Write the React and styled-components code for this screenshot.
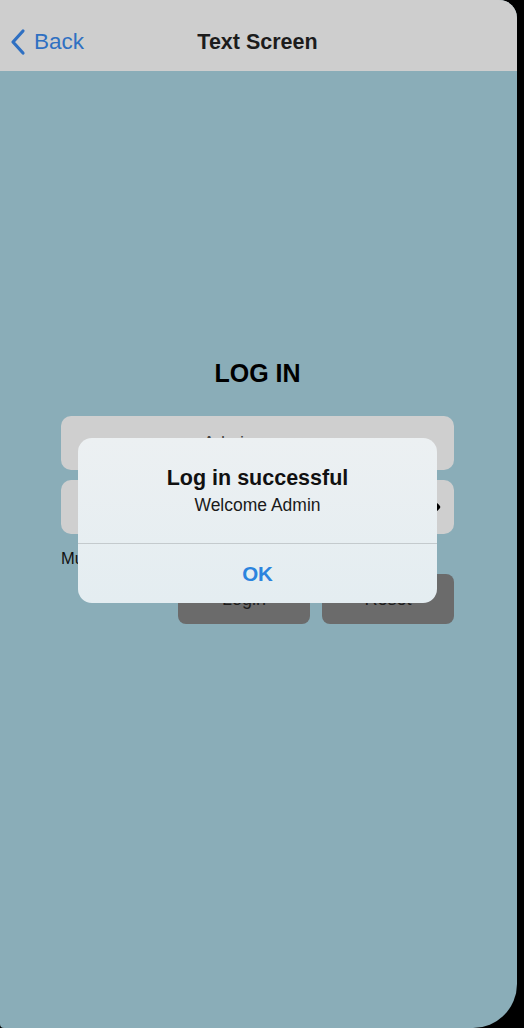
import React from 'react';
import styled, { createGlobalStyle } from 'styled-components';
import { IoEye } from 'react-icons/io5';

const GlobalStyle = createGlobalStyle`
  html, body {
    margin: 0;
    padding: 0;
    background: #000;
  }
  body {
    font-family: "Liberation Sans", Arial, sans-serif;
  }
`;

const Screen = styled.div`
  position: relative;
  width: 517px;
  height: 1028px;
  background: #8aadb8;
  border-radius: 0 18px 44px 4px;
  overflow: hidden;
  display: flex;
  flex-direction: column;
`;

const Header = styled.div`
  height: 71px;
  background: #cecece;
  display: grid;
  grid-template-columns: 1fr auto 1fr;
  align-items: center;
  padding-top: 13px;
  box-sizing: border-box;
`;

const BackButton = styled.div`
  display: flex;
  align-items: center;
  gap: 8px;
  padding-left: 9px;
  color: #2f70c2;
  font-size: 22.5px;
`;

const Title = styled.div`
  font-size: 21.5px;
  font-weight: 700;
  color: #1c1c1c;
  margin-right: 2px;
`;

const Content = styled.div`
  flex: 1;
  display: flex;
  flex-direction: column;
  align-items: center;
  padding: 287px 2px 0 0;
`;

const Heading = styled.h1`
  margin: 0 0 28px;
  font-size: 25px;
  line-height: 30px;
  font-weight: 700;
  color: #000;
`;

const Form = styled.div`
  width: 393px;
  display: flex;
  flex-direction: column;
  gap: 10px;
`;

const Field = styled.div`
  height: 54px;
  border-radius: 10px;
  background: #cfcfcf;
  display: flex;
  align-items: center;
  justify-content: center;
  padding-right: ${(props) => props.offset || 0}px;
  position: relative;
  font-size: 18px;
  color: #444;
`;

const EyeIcon = styled.span`
  position: absolute;
  right: 13px;
  top: 50%;
  transform: translateY(-50%);
  display: flex;
  color: #000;
`;

const Hint = styled.div`
  margin-top: 2px;
  font-size: 16.5px;
  line-height: 24px;
  color: #111;
`;

const Actions = styled.div`
  display: flex;
  justify-content: flex-end;
  gap: 12px;
  margin-top: -6px;
`;

const ActionButton = styled.div`
  width: 132px;
  height: 50px;
  border-radius: 8px;
  background: #6b6b6b;
  display: flex;
  align-items: center;
  justify-content: center;
  font-size: 18px;
  color: #1e1e1e;
`;

const Overlay = styled.div`
  position: absolute;
  inset: 0;
  display: flex;
  align-items: center;
  justify-content: center;
  padding: 13px 2px 0 0;
`;

const Alert = styled.div`
  width: 359px;
  border-radius: 14px;
  background: linear-gradient(180deg, #ecf0f2 0%, #e4edf1 100%);
  display: flex;
  flex-direction: column;
  overflow: hidden;
`;

const AlertBody = styled.div`
  padding: 27px 16px 27px;
  display: flex;
  flex-direction: column;
  align-items: center;
  border-bottom: 1px solid #c4cacd;
`;

const AlertTitle = styled.div`
  font-size: 21.5px;
  line-height: 26px;
  font-weight: 700;
  color: #111;
  margin-bottom: 3px;
`;

const AlertMessage = styled.div`
  font-size: 17.5px;
  line-height: 22px;
  color: #1a1a1a;
`;

const AlertButton = styled.div`
  height: 59px;
  display: flex;
  align-items: center;
  justify-content: center;
  font-size: 20.5px;
  font-weight: 700;
  color: #2b84de;
`;

const Chevron = () => (
  <svg width="17" height="28" viewBox="0 0 17 28" fill="none">
    <path d="M14 3 L4 14 L14 25" stroke="#2f70c2" strokeWidth="3.2" strokeLinecap="round" strokeLinejoin="round" />
  </svg>
);

export default function App() {
  return (
    <>
      <GlobalStyle />
      <Screen>
        <Header>
          <BackButton>
            <Chevron />
            <span>Back</span>
          </BackButton>
          <Title>Text Screen</Title>
          <div />
        </Header>
        <Content>
          <Heading>LOG IN</Heading>
          <Form>
            <Field offset={58}>Admin</Field>
            <Field>
              •••••
              <EyeIcon>
                <IoEye size={22} />
              </EyeIcon>
            </Field>
            <Hint>Must be at least 5 characters</Hint>
            <Actions>
              <ActionButton>Login</ActionButton>
              <ActionButton>Reset</ActionButton>
            </Actions>
          </Form>
        </Content>
        <Overlay>
          <Alert>
            <AlertBody>
              <AlertTitle>Log in successful</AlertTitle>
              <AlertMessage>Welcome Admin</AlertMessage>
            </AlertBody>
            <AlertButton>OK</AlertButton>
          </Alert>
        </Overlay>
      </Screen>
    </>
  );
}
